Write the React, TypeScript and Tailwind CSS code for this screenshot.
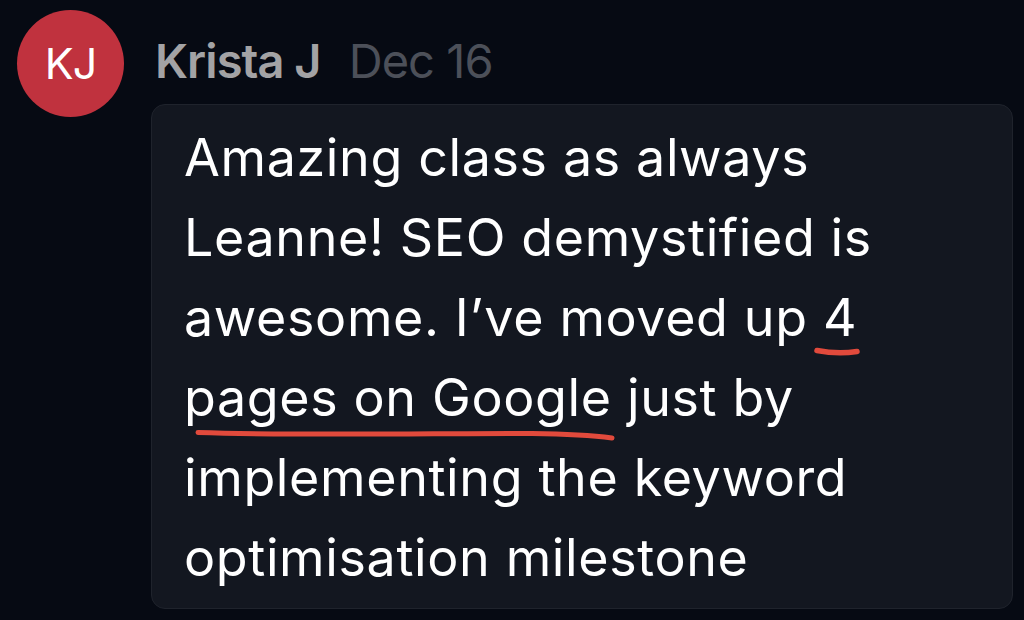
import React from "react";

const Underlines = () => (
  <svg
    className="pointer-events-none absolute left-0 top-0"
    width="862"
    height="505"
    viewBox="0 0 862 505"
    fill="none"
  >
    {/* under the "4" */}
    <path
      d="M665 245.5 C 678 248, 692 248.5, 705 246.5"
      stroke="#e14a3c"
      strokeWidth="5.5"
      strokeLinecap="round"
    />
    {/* under "pages on Google" */}
    <path
      d="M46 327.5 C 150 331, 300 328, 380 328.5 C 420 329, 445 331, 460 333"
      stroke="#e14a3c"
      strokeWidth="5"
      strokeLinecap="round"
    />
  </svg>
);

export default function App() {
  return (
    <div
      className="flex h-[620px] w-[1024px] items-start bg-[#060a13] pl-[17px] pt-[10px]"
      style={{ fontFamily: "Inter, 'Noto Sans', sans-serif" }}
    >
      <div className="flex h-[107px] w-[107px] shrink-0 items-center justify-center rounded-full bg-[#c0323e]">
        <span className="text-[43px] leading-none tracking-tight text-white">KJ</span>
      </div>

      <div className="ml-[27px] flex flex-col">
        <div className="flex h-[94px] items-center gap-[28px] pl-[4px] pt-[8px]">
          <span className="text-[47px] font-semibold tracking-[-0.02em] text-[#a3a3a5]">Krista J</span>
          <span className="text-[47px] tracking-[-0.02em] text-[#4c5059]">Dec 16</span>
        </div>

        <div className="relative h-[505px] w-[862px] rounded-[14px] border border-[#1f232c] bg-[#131720] pl-[32px] pt-[13px]">
          <p className="text-[52px] leading-[80px] tracking-[0.012em] text-white">
            Amazing class as always
            <br />
            Leanne! SEO demystified is
            <br />
            awesome. I’ve moved up 4
            <br />
            pages on Google just by
            <br />
            implementing the keyword
            <br />
            optimisation milestone
          </p>
          <Underlines />
        </div>
      </div>
    </div>
  );
}
